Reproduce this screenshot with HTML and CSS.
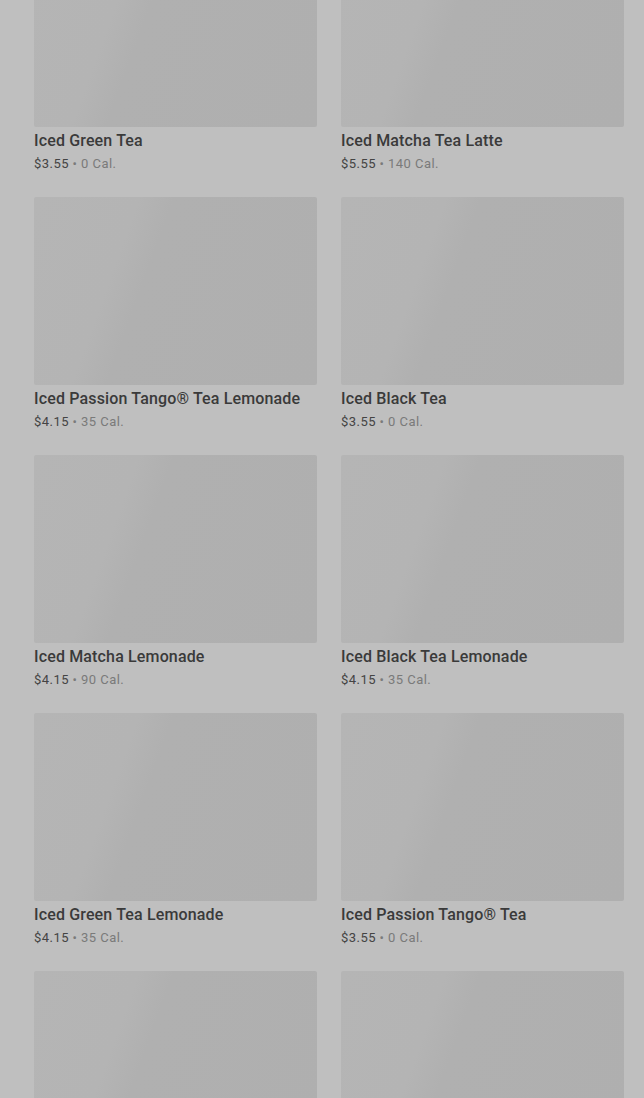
FILE: index.html
```html
<!DOCTYPE html>
<html>
<head>
<meta charset="utf-8">
<link rel="stylesheet" href="styles.css">
</head>
<body>
<div class="page">
  <div class="grid">
    <div class="card"><div class="thumb"></div><div class="name">Iced Green Tea</div><div class="meta"><span class="price">$3.55</span> <span class="cal">• 0 Cal.</span></div></div>
    <div class="card"><div class="thumb"></div><div class="name">Iced Matcha Tea Latte</div><div class="meta"><span class="price">$5.55</span> <span class="cal">• 140 Cal.</span></div></div>
    <div class="card"><div class="thumb"></div><div class="name">Iced Passion Tango® Tea Lemonade</div><div class="meta"><span class="price">$4.15</span> <span class="cal">• 35 Cal.</span></div></div>
    <div class="card"><div class="thumb"></div><div class="name">Iced Black Tea</div><div class="meta"><span class="price">$3.55</span> <span class="cal">• 0 Cal.</span></div></div>
    <div class="card"><div class="thumb"></div><div class="name">Iced Matcha Lemonade</div><div class="meta"><span class="price">$4.15</span> <span class="cal">• 90 Cal.</span></div></div>
    <div class="card"><div class="thumb"></div><div class="name">Iced Black Tea Lemonade</div><div class="meta"><span class="price">$4.15</span> <span class="cal">• 35 Cal.</span></div></div>
    <div class="card"><div class="thumb"></div><div class="name">Iced Green Tea Lemonade</div><div class="meta"><span class="price">$4.15</span> <span class="cal">• 35 Cal.</span></div></div>
    <div class="card"><div class="thumb"></div><div class="name">Iced Passion Tango® Tea</div><div class="meta"><span class="price">$3.55</span> <span class="cal">• 0 Cal.</span></div></div>
    <div class="card"><div class="thumb"></div></div>
    <div class="card"><div class="thumb"></div></div>
  </div>
</div>
</body>
</html>
```
FILE: styles.css
```css
html, body {
  margin: 0;
  padding: 0;
  background: #bfbfbf;
  overflow: hidden;
}
body {
  font-family: Roboto, "Noto Sans", "Liberation Sans", sans-serif;
  height: 1098px;
}
.page {
  padding: 0 20px 0 34px;
}
.grid {
  display: grid;
  grid-template-columns: 283px 283px;
  column-gap: 24px;
  row-gap: 24px;
  margin-top: -61px;
}
.card {
  display: flex;
  flex-direction: column;
}
.thumb {
  height: 188px;
  border-radius: 2px;
  background: linear-gradient(110deg, #b5b5b5 0%, #b4b4b4 30%, #b0b0b0 40%, #afafaf 100%);
}
.name {
  margin-top: 4px;
  font-size: 16px;
  line-height: 20px;
  font-weight: 500;
  color: #3a3a3a;
  letter-spacing: 0.15px;
}
.meta {
  margin-top: 4px;
  font-size: 13px;
  line-height: 18px;
  letter-spacing: 0.45px;
}
.price {
  color: #444444;
}
.cal {
  color: #7a7a7a;
}
```
